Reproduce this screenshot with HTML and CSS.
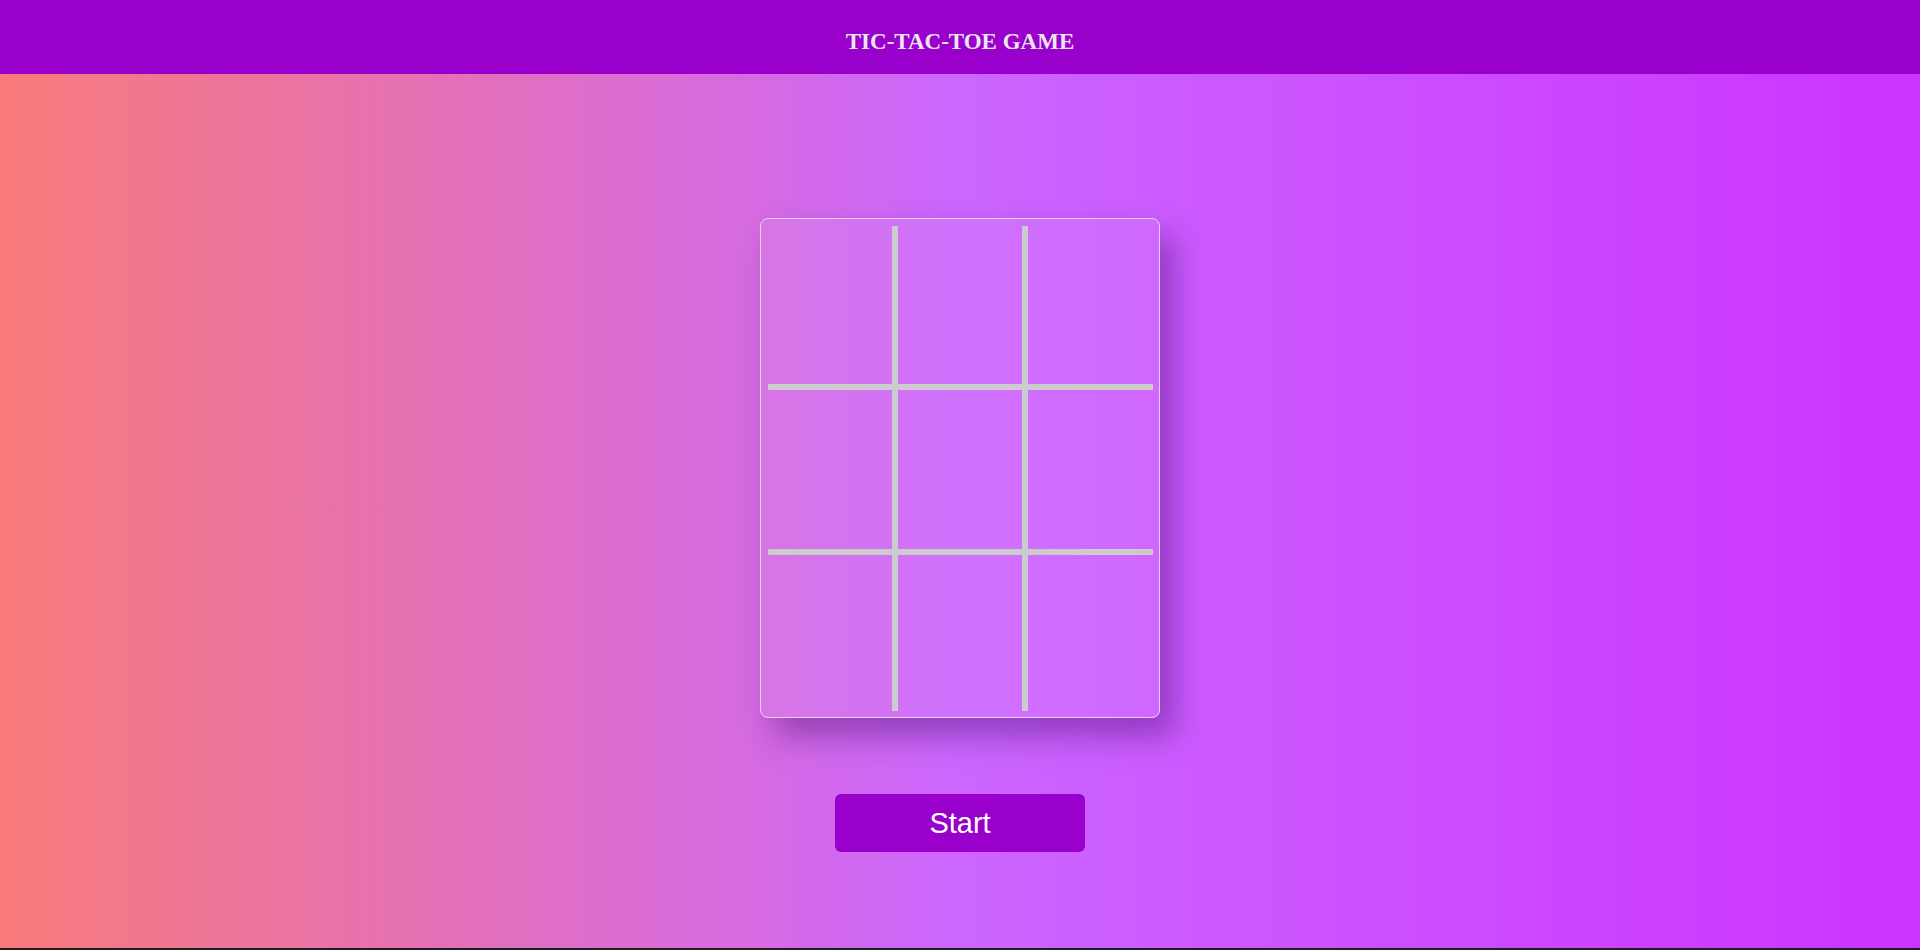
FILE: index.html
```html
<!DOCTYPE html>
<html lang="en">
<head>
<meta charset="utf-8">
<title>Tic-Tac-Toe Game</title>
<link rel="stylesheet" href="styles.css">
</head>
<body>
<header class="topbar">
  <h1 class="title">TIC-TAC-TOE GAME</h1>
</header>
<main class="main">
  <div class="board">
    <div class="cell"></div>
    <div class="cell col-mid"></div>
    <div class="cell"></div>
    <div class="cell row-mid"></div>
    <div class="cell row-mid col-mid"></div>
    <div class="cell row-mid"></div>
    <div class="cell"></div>
    <div class="cell col-mid"></div>
    <div class="cell"></div>
  </div>
  <button class="start-btn" type="button">Start</button>
</main>
</body>
</html>
```

FILE: styles.css
```css
html {
  background: #1e1e1e;
  height: 100%;
}
body {
  margin: 0;
  height: 948px;
  background: linear-gradient(to right, #f87a7a 0%, #cc66ff 50%, #cc33ff 100%);
  font-family: "Liberation Serif", serif;
  overflow: hidden;
}
.topbar {
  height: 74px;
  box-sizing: border-box;
  background: #9900cc;
  padding-top: 29px;
  text-align: center;
}
.title {
  margin: 0;
  font-family: "Liberation Serif", serif;
  font-weight: bold;
  font-size: 23px;
  line-height: normal;
  color: #ece6f2;
}
.main {
  display: flex;
  flex-direction: column;
  align-items: center;
  padding-top: 144px;
  gap: 76px;
}
.board {
  width: 400px;
  height: 500px;
  box-sizing: border-box;
  border: 1px solid #e2d2ea;
  border-radius: 8px;
  background: rgba(255, 255, 255, 0.08);
  box-shadow: 14px 18px 32px rgba(50, 0, 90, 0.38);
  padding: 7px 6px 6px 7px;
  display: grid;
  grid-template-columns: 124px 136px 125px;
  grid-template-rows: 158px 171px 156px;
}
.cell {
  box-sizing: border-box;
}
.col-mid {
  border-left: 6px solid #cccccc;
  border-right: 6px solid #cccccc;
}
.row-mid {
  border-top: 6px solid #cccccc;
  border-bottom: 6px solid #cccccc;
}
.start-btn {
  width: 250px;
  height: 58px;
  border: none;
  border-radius: 6px;
  background: #9900cc;
  color: #ffffff;
  font-family: "Liberation Sans", Arial, sans-serif;
  font-size: 29px;
  padding: 0;
  cursor: pointer;
}
```
